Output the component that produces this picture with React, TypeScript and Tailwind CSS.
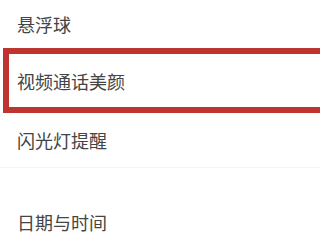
export default function App() {
  return (
    <div
      className="w-[320px] h-[240px] overflow-hidden bg-white text-[18px] text-[#444444]"
      style={{ fontFamily: '"Noto Sans CJK SC", "Noto Sans", sans-serif' }}
    >
      {/* 悬浮球 */}
      <div className="h-[48px] flex items-center pl-[17px] pt-[1px]">悬浮球</div>

      {/* highlighted row */}
      <div className="ml-[3px] w-[330px] h-[65px] border-[6px] border-[#be3530] flex items-center pl-[8px] pt-[2px]">
        视频通话美颜
      </div>

      {/* 闪光灯提醒 */}
      <div className="h-[55px] flex items-center pl-[17px] border-b border-[#f4f4f4]">闪光灯提醒</div>

      <div className="h-[27px]" />

      {/* 日期与时间 */}
      <div className="h-[55px] flex items-center pl-[17px]">日期与时间</div>
    </div>
  );
}
